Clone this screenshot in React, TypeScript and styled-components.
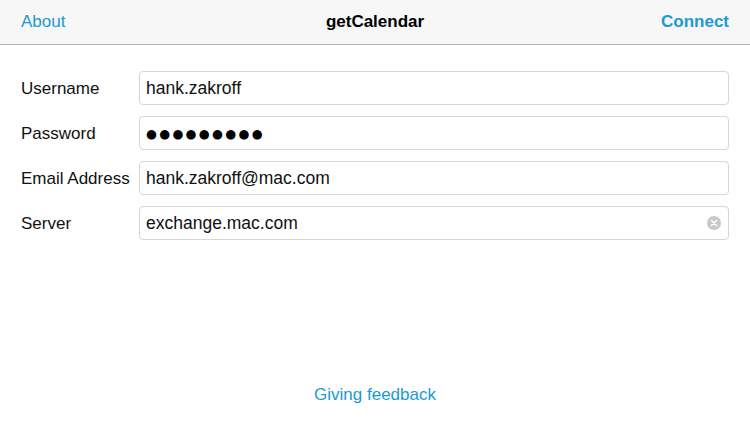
import styled, { createGlobalStyle } from 'styled-components';

const GlobalStyles = createGlobalStyle`
  html, body {
    margin: 0;
    padding: 0;
    background: #ffffff;
    font-family: "Liberation Sans", Arial, sans-serif;
    -webkit-font-smoothing: antialiased;
  }
  * { box-sizing: border-box; }
`;

const Screen = styled.div`
  display: flex;
  flex-direction: column;
  height: 100vh;
  background: #ffffff;
`;

const NavBar = styled.header`
  height: 45px;
  display: grid;
  grid-template-columns: 1fr auto 1fr;
  align-items: center;
  padding: 0 21px;
  background: #f7f7f7;
  border-bottom: 1px solid #b4b4b4;
`;

const NavLink = styled.span<{ bold?: boolean; right?: boolean }>`
  font-size: 17px;
  color: #1a9ad6;
  font-weight: ${({ bold }) => (bold ? 700 : 400)};
  justify-self: ${({ right }) => (right ? 'end' : 'start')};
`;

const Title = styled.h1`
  margin: 0;
  font-size: 17px;
  font-weight: 700;
  color: #000;
`;

const Form = styled.div`
  display: grid;
  grid-template-columns: 118px 1fr;
  row-gap: 11px;
  padding: 26px 21px 0 21px;
  align-items: center;
`;

const Label = styled.span`
  font-size: 17px;
  color: #111;
  padding-top: 2px;
`;

const Field = styled.div`
  height: 34px;
  display: flex;
  align-items: center;
  justify-content: space-between;
  padding: 0 7px 0 6px;
  border: 1px solid #d6d6d6;
  border-radius: 4px;
  font-size: 17.5px;
  color: #111;
`;

const Dots = styled.span`
  font-family: "DejaVu Sans", sans-serif;
  font-size: 12.5px;
  letter-spacing: 2.3px;
  color: #000;
`;

const ClearIcon = styled.span`
  width: 14px;
  height: 14px;
  border-radius: 50%;
  background: #c7c7cc;
  display: flex;
  align-items: center;
  justify-content: center;
`;

const Footer = styled.div`
  margin-top: auto;
  padding-bottom: 17px;
  text-align: center;
  font-size: 17px;
  color: #1a9ad6;
`;

export default function App() {
  return (
    <>
      <GlobalStyles />
      <Screen>
        <NavBar>
          <NavLink>About</NavLink>
          <Title>getCalendar</Title>
          <NavLink bold right>Connect</NavLink>
        </NavBar>
        <Form>
          <Label>Username</Label>
          <Field>hank.zakroff</Field>
          <Label>Password</Label>
          <Field><Dots>●●●●●●●●●</Dots></Field>
          <Label>Email Address</Label>
          <Field>hank.zakroff@mac.com</Field>
          <Label>Server</Label>
          <Field>
            exchange.mac.com
            <ClearIcon>
              <svg width="8" height="8" viewBox="0 0 8 8">
                <path d="M1.5 1.5 L6.5 6.5 M6.5 1.5 L1.5 6.5" stroke="#fff" strokeWidth="1.6" strokeLinecap="round" />
              </svg>
            </ClearIcon>
          </Field>
        </Form>
        <Footer>Giving feedback</Footer>
      </Screen>
    </>
  );
}
